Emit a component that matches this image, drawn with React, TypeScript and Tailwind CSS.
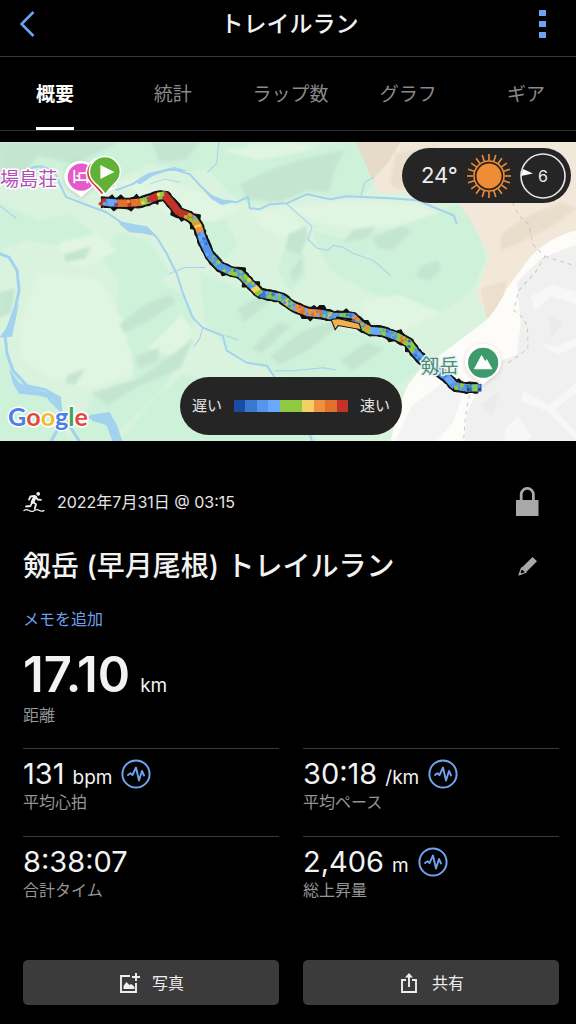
import { clsx } from 'clsx';

type Point = [number, number];

const TABS = ['概要', '統計', 'ラップ数', 'グラフ', 'ギア'];

const SPEED_COLORS = [
  '#1c4ba3', '#3a78cf', '#5596ec', '#69a8fb', '#8fca42',
  '#8fca42', '#f4cf62', '#ef9240', '#e0702c', '#c23428',
];

const RIVER = '#a3d2ef';

const MINT_SLOPES = [
  'M0 0H250L232 22 190 30 150 22 118 38 60 30 0 44Z',
  'M0 60 40 78 70 72 96 92 60 104 30 98 0 108Z',
  'M120 90 150 100 170 130 150 150 118 138 100 112Z',
  'M120 120 182 150 195 176 190 205 160 250 110 298H70L95 250 135 236 132 210 118 180Z',
  'M0 200 24 240 58 262 70 298H0Z',
  'M205 22 262 8 345 0H362L378 36 362 53 330 56 307 51 283 60 252 64 230 52Z',
  'M190 70 226 78 238 102 225 118 208 108Z',
  'M288 96 305 112 306 134 290 150 278 128Z',
  'M312 88 340 96 400 84 462 60 478 88 486 116 470 150 440 170 400 160 370 150 330 128 318 106Z',
  'M200 130 250 150 320 178 400 205 420 226 392 246 330 238 275 232 228 206 205 180Z',
  'M402 252 425 228 452 240 430 262 404 274Z',
  'M182 232 230 238 280 262 320 298H120L150 262Z',
];

const PALE_SLOPES = [
  'M24 178 40 130 100 138 124 180 134 230 90 246 48 234 20 214Z',
  'M118 38 160 36 206 52 240 66 212 80 170 70Z',
  'M254 70 286 66 308 90 306 98 280 94 262 84Z',
  'M290 66 340 60 410 62 440 70 400 82 350 86 318 80Z',
  'M222 8 290 2 320 6 260 18Z',
  'M60 100 96 92 118 108 86 124 64 120Z',
  'M398 152 440 170 400 190 366 176 362 160Z',
  'M148 206 182 172 194 190 176 214Z',
];

const DARK_SLOPES = [
  'M0 0H120L76 22 40 14 20 34 0 38Z',
  'M152 0H200L186 18 160 20Z',
  'M240 42 270 28 300 18 345 8 336 24 328 50 306 48 280 60 246 56Z',
  'M288 92 306 84 308 94 300 112 286 108Z',
  'M290 130 302 114 302 128 294 140Z',
  'M372 96 400 84 412 88 392 108 378 106Z',
  'M352 88 376 84 366 96 344 100Z',
  'M420 124 438 118 440 128 428 138 416 134Z',
  'M120 182 146 162 170 152 176 160 146 180 124 190Z',
  'M136 214 160 204 158 218 140 226Z',
  'M92 250 140 236 180 206 194 196 180 226 138 244 108 262Z',
  'M68 232 86 226 76 242 66 240Z',
  'M238 166 266 150 276 154 244 180Z',
  'M270 214 300 190 332 178 338 184 310 206 280 222Z',
  'M252 206 278 180 290 184 262 210Z',
  'M340 218 366 200 384 206 352 228Z',
  'M64 112 92 104 86 116 66 120Z',
  'M0 150 16 146 12 170 0 176Z',
];

const RIVERS: { d: string; width: number }[] = [
  { d: 'M30 27Q42 20 56 31L62 45 67 55 83 61 107 70 123 81 147 85 157 95 167 111 177 131 183 150 193 175 203 185 223 193 227 208 247 220 267 223 275 235 300 262 312 298', width: 2 },
  { d: 'M117 48 133 42 147 33 173 27 190 32 200 43 212 54 222 58 237 60 248 55 250 66 260 67 270 62 287 61 307 52 330 57 347 54 390 56 417 58 433 65 453 73 456 81', width: 2 },
  { d: 'M287 62 312 84 308 97 317 106 328 108 333 103 343 105 353 111 373 118 390 133', width: 1 },
  { d: 'M361 53 364 41 373 35', width: 1 },
  { d: 'M219 0 217 21 208 30', width: 1 },
  { d: 'M275 228 293 228 323 225 335 227', width: 1 },
  { d: 'M203 185 200 196 194 204M226 193 238 197', width: 1 },
  { d: 'M150 42 165 37 180 40M170 131 185 125 205 125M0 63 17 76', width: 1 },
  { d: 'M0 111 10 115 18 128 20 148 16 166 6 193 8 211 14 228 28 243 46 247 60 255 62 270 80 298', width: 3 },
  { d: 'M62 268 50 256M88 275 110 272 114 284 120 298M62 280 52 298', width: 3 },
];

// Shape of the route and the pace colours used from each point on
const ROUTE: { at: Point; colors: string }[] = [
  { at: [102, 60], colors: '9' },
  { at: [106, 60], colors: '3231' },
  { at: [118, 61], colors: '9878' },
  { at: [128, 61], colors: '8798' },
  { at: [141, 60], colors: '564' },
  { at: [148, 58], colors: '9398' },
  { at: [158, 54], colors: '4563' },
  { at: [165, 53], colors: '9' },
  { at: [172, 61], colors: '9' },
  { at: [179, 70], colors: '9' },
  { at: [187, 73], colors: '8745' },
  { at: [194, 77], colors: '7643' },
  { at: [199, 85], colors: '3712' },
  { at: [203, 98], colors: '2123' },
  { at: [210, 113], colors: '2521' },
  { at: [220, 124], colors: '1234' },
  { at: [231, 129], colors: '2124' },
  { at: [240, 131], colors: '5624' },
  { at: [250, 141], colors: '2645' },
  { at: [260, 151], colors: '1234' },
  { at: [281, 155], colors: '4262' },
  { at: [293, 164], colors: '2738' },
  { at: [308, 170], colors: '8237' },
  { at: [322, 171], colors: '2624' },
  { at: [334, 174], colors: '1234' },
  { at: [352, 174], colors: '2178' },
  { at: [361, 183], colors: '7542' },
  { at: [370, 188], colors: '2453' },
  { at: [383, 189], colors: '1242' },
  { at: [397, 194], colors: '8454' },
  { at: [408, 200], colors: '1254' },
  { at: [416, 211], colors: '1232' },
  { at: [426, 221], colors: '2312' },
  { at: [446, 234], colors: '1323' },
  { at: [454, 243], colors: '4254' },
  { at: [466, 245], colors: '0124' },
  { at: [480, 245], colors: '0' },
];

const noise = (n: number) => {
  const x = Math.sin(n * 12.9898) * 43758.5453;
  return x - Math.floor(x);
};

function buildRoute() {
  const left: Point[] = [];
  const right: Point[] = [];
  const dabs: { from: Point; to: Point; fill: string; side: string }[] = [];
  let n = 0;
  for (let i = 0; i < ROUTE.length - 1; i++) {
    const [x1, y1] = ROUTE[i].at;
    const [x2, y2] = ROUTE[i + 1].at;
    const len = Math.hypot(x2 - x1, y2 - y1);
    const nx = -(y2 - y1) / len;
    const ny = (x2 - x1) / len;
    const steps = Math.max(2, Math.round(len / 3));
    const { colors } = ROUTE[i];
    for (let s = 0; s < steps; s++) {
      n++;
      const px = x1 + ((x2 - x1) * s) / steps;
      const py = y1 + ((y2 - y1) * s) / steps;
      const qx = x1 + ((x2 - x1) * (s + 1)) / steps;
      const qy = y1 + ((y2 - y1) * (s + 1)) / steps;
      const a = 4.6 + noise(n) * 1.1 + (noise(n + 90) > 0.92 ? 2.6 : 0);
      const b = 4.6 + noise(n + 400) * 1.1 + (noise(n + 700) > 0.92 ? 2.6 : 0);
      left.push([px + nx * a, py + ny * a]);
      right.push([px - nx * b, py - ny * b]);
      const pick = (k: number) => SPEED_COLORS[Number(colors[Math.floor(noise(k) * colors.length)])];
      dabs.push({ from: [px, py], to: [qx + (qx - px) * 0.3, qy + (qy - py) * 0.3], fill: pick(n + 30), side: pick(n + 60) });
    }
  }
  const outline = [...left, ...right.reverse()].map(p => p.map(v => v.toFixed(1)).join(',')).join(' ');
  return { outline, dabs };
}

const route = buildRoute();

function RouteTrack() {
  return (
    <g>
      <polygon points={route.outline} fill="#101010" stroke="#101010" strokeWidth="1" strokeLinejoin="round" />
      {route.dabs.map(({ from, to, fill }, i) => (
        <line key={i} x1={from[0]} y1={from[1]} x2={to[0]} y2={to[1]} stroke={fill} strokeWidth="7.4" />
      ))}
      {route.dabs.map(({ from, side }, i) => (
        <circle key={i} cx={from[0] + (i % 2 ? 1 : -1)} cy={from[1] + (i % 2 ? -1.6 : 1.6)} r="1.8" fill={side} />
      ))}
      <path d="m331 177 7-1 21 5 2 6-23-4-3 4Z" fill="#f3b04e" stroke="#101010" strokeWidth="1" />
      <path d="m336 175 16 2" stroke="#101010" strokeWidth="2" />
    </g>
  );
}

function TrailMap() {
  return (
    <svg viewBox="0 0 576 298" preserveAspectRatio="xMidYMid slice" className="block h-full w-full" role="img" aria-label="ルートマップ">
      <defs>
        <filter id="relief" x="-5%" y="-5%" width="110%" height="110%">
          <feGaussianBlur stdDeviation="1.6" />
        </filter>
      </defs>
      <rect width="576" height="298" fill="#daf3df" />
      <g filter="url(#relief)">
        {MINT_SLOPES.map(d => <path key={d} d={d} fill="#cef1da" />)}
        {PALE_SLOPES.map(d => <path key={d} d={d} fill="#e1f6e2" />)}
        {DARK_SLOPES.map(d => <path key={d} d={d} fill="#c4e5d0" />)}
      </g>

      <path d="M356 0H576V170L500 180 478 160 478 146 488 114 470 78 455 58 430 52 377 50 372 34Z" fill="#f2e8d9" />
      <path d="M356 0H400L388 20 372 38Z" fill="#e6dac8" />
      <path d="M395 12 440 2 412 28 402 48 390 42ZM500 92 526 74 560 60 576 66 548 86 520 100 500 108Z" fill="#e9decb" filter="url(#relief)" />
      <path d="M480 146 506 138 500 168 486 176Z" fill="#eddfce" />
      <path d="M576 88Q550 94 530 114L506 146Q494 172 480 182L440 212Q408 230 400 262L390 298H576Z" fill="#fdfcf9" />
      <path d="M576 102 540 116 516 140 520 180 516 212 500 218 478 246 466 270 464 298H576Z" fill="#f0f0f1" />
      <path d="M395 298 412 262 442 240 462 252 452 280 436 298Z" fill="#f3f3f4" />
      <g fill="#f7f7f7">
        <path d="m530 154 22-12 24 8v12l-26-8-16 14ZM522 248l26 14 28-22v10l-22 16 22 24v8l-30-30-26-10Z" />
        <path d="m505 285 12-12 14 20-6 5h-22ZM540 200l14 4 22-8v8l-20 8Z" />
      </g>
      <path d="m548 172 14 8-12 16ZM480 262l20-14-8 24Z" fill="#ebebed" />
      <g fill="none" stroke="#c9c9c4" strokeWidth="1" strokeDasharray="4 4">
        <path d="M512 60q4 14 16 22l4 20 12 12-8 14-18 20-5 20q14 8 14 24v14l-22 16M544 114l32 10M469 252l-4 20-2 26" />
      </g>

      <g fill="none" stroke={RIVER} strokeLinejoin="round" strokeLinecap="round">
        {RIVERS.map(({ d, width }) => <path key={d} d={d} strokeWidth={width} />)}
      </g>
      <g fill={RIVER}>
        <path d="m120 79 27 6 9 9-14-3-12-1-10-8ZM135 40l14-9 26-6 14 4-22 0-14 5-12 8ZM202 46l18 12 18 1-16 4-10-6Z" />
        <path d="m20 160-7 34-13 1 10-13ZM10 226l10 14 12 5 30 9v18l-8-15-14-4-20-2-6-10ZM90 272l20-3 7 12 6 17h-10l-6-16-14-4Z" />
      </g>

      <RouteTrack />

      <g fontFamily="Inter, 'Noto Sans CJK JP', sans-serif" strokeLinejoin="round" paintOrder="stroke">
        <text x="1" y="44" fontSize="19" fill="#b44bbb" stroke="#fff" strokeWidth="3">場島荘</text>
        <text x="420" y="230" fontSize="19" fill="#4d8b7c" stroke="#e6f5ee" strokeWidth="3">剱岳</text>
      </g>

      {/* lodge pin */}
      <g className="drop-shadow-sm">
        <path d="M82 55q-3-3-8-6a16 16 0 1 1 16-1q-5 4-8 7Z" fill="#fff" />
        <circle cx="82" cy="35" r="13.500" fill="#e55bc9" />
        <path d="M75 28v13M75 38h13M88 41V31h-8v7" fill="none" stroke="#fff" strokeWidth="1.800" />
        <circle cx="78" cy="34" r="1" fill="#fff" />
      </g>
      {/* start and finish pins */}
      <path d="M102 53C96 44 87 40 87 31a15 15 0 0 1 16-15L116 44Z" fill="#dd3c3c" stroke="#fff" strokeWidth="1.500" />
      <path d="M106 53C102 44 90 40 90 30a15.500 15.500 0 0 1 31 0C121 40 110 44 106 53Z" fill="#5fb235" stroke="#fff" strokeWidth="1.500" />
      <path d="m101 23 14 7-14 7Z" fill="#fff" />
      {/* summit pin */}
      <g className="drop-shadow-sm">
        <path d="M483 242q-4-4-9-7a18 18 0 1 1 17 0q-5 3-8 7Z" fill="#fff" />
        <circle cx="482.500" cy="220" r="15" fill="#3d9a6b" />
        <path d="m474 226 7-13 3.500 6.500-2 4.500 3.500-7 5 9Z" fill="#fff" stroke="#fff" strokeWidth="1" strokeLinejoin="round" />
      </g>

      <text x="9" y="283" fontFamily="Lato, sans-serif" fontSize="25" fontWeight="700" stroke="#fff" strokeWidth="3" strokeLinejoin="round" paintOrder="stroke">
        <tspan fill="#4a80e8">G</tspan>
        <tspan fill="#dd4b3e">o</tspan>
        <tspan fill="#efbd35">o</tspan>
        <tspan fill="#4a80e8">g</tspan>
        <tspan fill="#3fa257">l</tspan>
        <tspan fill="#dd4b3e">e</tspan>
      </text>
    </svg>
  );
}

function SunIcon() {
  return (
    <svg viewBox="0 0 46 46" className="size-[46px]" fill="none" stroke="#ef8d37" aria-hidden="true">
      <circle cx="23" cy="23" r="12.500" fill="#ef8d37" stroke="none" />
      <circle cx="23" cy="23" r="15" strokeWidth="1.500" />
      {Array.from({ length: 20 }, (_, i) => (
        <path key={i} d="M23 7.500V1" strokeWidth="1.600" transform={`rotate(${i * 18} 23 23)`} />
      ))}
    </svg>
  );
}

function WeatherBadge() {
  return (
    <div className="absolute top-[6px] right-[5px] flex h-[55px] w-[169px] items-center justify-between rounded-full bg-[#252525] pr-[5px] pl-[19px] text-[#eee]">
      <span className="text-[22px]">24°</span>
      <div className="flex items-center gap-2">
        <SunIcon />
        <div className="relative flex size-[46px] items-center justify-center">
          <svg viewBox="0 0 46 46" className="absolute inset-0" aria-hidden="true">
            <circle cx="23" cy="23" r="22" fill="none" stroke="#e8e8e8" strokeWidth="1.600" />
            <path d="m3 16 10 4.500L1 23Z" fill="#fff" />
          </svg>
          <span className="text-base">6</span>
        </div>
      </div>
    </div>
  );
}

function SpeedLegend() {
  return (
    <div className="absolute bottom-[6px] left-[180px] flex h-[58px] w-[222px] items-center gap-3 rounded-full bg-[#252525] px-3 text-[15px] text-[#e4e4e4]">
      <span>遅い</span>
      <div className="flex h-3 flex-1">
        {SPEED_COLORS.map((color, i) => (
          <span key={i} className="flex-1" style={{ backgroundColor: color }} />
        ))}
      </div>
      <span>速い</span>
    </div>
  );
}

function TrailRunIcon() {
  return (
    <svg viewBox="0 0 22 22" className="size-[22px]" fill="none" stroke="#eee" strokeLinecap="round" strokeLinejoin="round" aria-hidden="true">
      <circle cx="15.200" cy="2.800" r="1.900" fill="#eee" stroke="none" />
      <path d="M12 6 9.500 11" strokeWidth="3.600" />
      <path d="M11.500 5 7.500 5.500 6 8.500M13 6l1.500 2.500 3.500.3M10 11l3 2.200-1.200 4.600M9 11.500 7.500 15 3 15.500" strokeWidth="1.800" />
      <path d="M1 19.500c2-1.600 3.500-1 5 0s3.500 1.200 5 .2 3.500-1.400 5-.4 3 1.200 5 .4" strokeWidth="1.300" />
    </svg>
  );
}

function GraphButton({ label }: { label: string }) {
  return (
    <button type="button" aria-label={`${label}のグラフ`} className="ml-[9px]">
      <svg viewBox="0 0 30 30" className="size-[30px]" fill="none" stroke="#6ea3ef" strokeLinejoin="round" strokeLinecap="round" aria-hidden="true">
        <circle cx="15" cy="15" r="13.600" strokeWidth="2" />
        <path d="m7 16 2.500-1.800 2 2L15 8.500l3 13 3-9.500 2 4.500" strokeWidth="1.900" />
      </svg>
    </button>
  );
}

interface StatProps {
  label: string;
  value: string;
  unit?: string;
  graph?: boolean;
}

function Stat({ label, value, unit, graph }: StatProps) {
  return (
    <div className="border-t border-[#3b3b3b] pt-[7px] pb-6">
      <div className="flex h-9 items-center">
        <p className="flex items-baseline gap-2">
          <span className="text-[29px] leading-9">{value}</span>
          {unit && <span className="text-[19px] leading-6">{unit}</span>}
        </p>
        {graph && <GraphButton label={label} />}
      </div>
      <p className="text-base leading-5 text-[#959595]">{label}</p>
    </div>
  );
}

const ACTION = 'flex h-[45px] items-center justify-center gap-3 rounded-[5px] bg-[#3b3b3b] text-base text-[#eee]';

export default function App() {
  return (
    <div lang="ja" className="min-h-screen overflow-x-hidden bg-black font-[Inter,'Noto_Sans_CJK_JP',sans-serif] text-[#f2f2f2]">
      <header className="flex h-[57px] items-center justify-between border-b border-[#393939] pr-[30px] pb-[8px] pl-[20px]">
        <button type="button" aria-label="戻る" className="w-5">
          <svg viewBox="0 0 20 28" className="h-7 w-5" fill="none" stroke="#6ea3ef" strokeWidth="2.600">
            <path d="M13.500 2 1.500 14l12 12" />
          </svg>
        </button>
        <h1 className="text-[23px] font-medium">トレイルラン</h1>
        <button type="button" aria-label="メニュー" className="flex w-[7px] flex-col gap-[5px]">
          <span className="h-[6px] bg-[#6ea3ef]" />
          <span className="h-[6px] bg-[#6ea3ef]" />
          <span className="h-[6px] bg-[#6ea3ef]" />
        </button>
      </header>

      <nav className="overflow-hidden border-b border-[#2e2e2e]">
        <div className="-mr-[9px] -ml-[4px] grid grid-cols-5">
          {TABS.map((tab, i) => (
            <button
              key={tab}
              type="button"
              className={clsx(
                'h-[73px] justify-self-center border-b-3 pt-[6px] text-[19px]',
                i === 0 ? 'border-white font-bold text-white' : 'border-transparent text-[#8a8a8a]',
              )}
            >
              {tab}
            </button>
          ))}
        </div>
      </nav>

      <section className="relative mt-[11px] h-[299px] overflow-hidden">
        <TrailMap />
        <WeatherBadge />
        <SpeedLegend />
      </section>

      <main className="pt-[45px] pr-[17px] pb-[19px] pl-[23px]">
        <div className="flex h-8 items-center justify-between pr-[19px]">
          <div className="flex items-center gap-3">
            <TrailRunIcon />
            <p className="text-base text-[#e6e6e6]">2022年7月31日 @ 03:15</p>
          </div>
          <button type="button" aria-label="公開設定">
            <svg viewBox="0 0 26 30" className="h-[30px] w-[26px]" aria-hidden="true">
              <path d="M2 13h22.500v16H2Z" fill="#a8a8a8" />
              <path d="M7.200 14V7.500a6.100 6.100 0 0 1 12.200 0V14" fill="none" stroke="#a8a8a8" strokeWidth="2.800" />
            </svg>
          </button>
        </div>

        <div className="mt-7 flex h-10 items-center justify-between pr-[21px]">
          <h2 className="text-[28px] font-medium">剱岳 (早月尾根) トレイルラン</h2>
          <button type="button" aria-label="名前を編集">
            <svg viewBox="0 0 20 20" className="size-5" fill="#a8a8a8" aria-hidden="true">
              <path d="m14.500 1 4.500 4.200L8 16.200 3.500 12Z" />
              <path d="M3.500 12 1 19l7-2.800Z" fill="none" stroke="#a8a8a8" strokeWidth="1.200" strokeLinejoin="round" />
              <path d="M1 19l1-3 2 2Z" />
            </svg>
          </button>
        </div>

        <button type="button" className="mt-[21px] block h-6 text-base leading-6 text-[#6c9fe9]">メモを追加</button>

        <p className="mt-5 flex items-baseline gap-[10px]">
          <span className="text-[49px] leading-12 font-semibold">17.10</span>
          <span className="text-[19px] leading-6">km</span>
        </p>
        <p className="mt-1 text-base leading-6 text-[#959595]">距離</p>

        <div className="mt-[21px] grid grid-cols-2 gap-x-6">
          <Stat label="平均心拍" value="131" unit="bpm" graph />
          <Stat label="平均ペース" value="30:18" unit="/km" graph />
          <Stat label="合計タイム" value="8:38:07" />
          <Stat label="総上昇量" value="2,406" unit="m" graph />
        </div>

        <div className="mt-9 grid grid-cols-2 gap-x-6">
          <button type="button" className={ACTION}>
            <svg viewBox="0 0 22 22" className="size-[22px]" fill="none" stroke="#eee" strokeWidth="1.900" aria-hidden="true">
              <path d="M12 4H3v16h15V11M18 1v8M14 5h8" />
              <path d="M5.500 17v-3l3-4 3 3 2-1 3 3v2Z" fill="#eee" stroke="none" />
            </svg>
            写真
          </button>
          <button type="button" className={ACTION}>
            <svg viewBox="0 0 22 22" className="size-[22px]" fill="none" stroke="#eee" strokeWidth="1.900" aria-hidden="true">
              <path d="M8 8H4v12h14V8h-4M11 15V3" />
              <path d="m7 5.500 4-4.500 4 4.500Z" fill="#eee" stroke="none" />
            </svg>
            共有
          </button>
        </div>
      </main>
    </div>
  );
}
